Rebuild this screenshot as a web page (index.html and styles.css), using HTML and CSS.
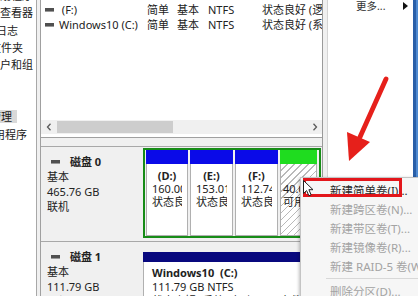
FILE: index.html
```html
<!DOCTYPE html>
<html lang="zh-CN">
<head>
<meta charset="utf-8">
<title>磁盘管理</title>
<link rel="stylesheet" href="styles.css">
</head>
<body>
<div class="screen">
  <aside class="nav">
    <div class="nav-inner">
      <div class="nav-item"><span class="i0">任务计划程序</span></div>
      <div class="nav-item"><span class="i1">事件查看器</span></div>
      <div class="nav-item"><span class="i2">事件日志</span></div>
      <div class="nav-item"><span class="i3">共享文件夹</span></div>
      <div class="nav-item"><span class="i4">本地用户和组</span></div>
      <div class="nav-item"><span class="i5">性能</span></div>
      <div class="nav-item"><span class="i6">存储</span></div>
      <div class="nav-item"><span class="i7 selected">磁盘管理</span></div>
      <div class="nav-item"><span class="i8">服务和应用程序</span></div>
    </div>
  </aside>
  <div class="gap-a"></div>
  <main class="main">
    <section class="list">
      <div class="rows">
        <div class="row">
          <span class="c-name"><i class="drv"></i>&nbsp;(F:)</span>
          <span class="c-layout">简单</span>
          <span class="c-type">基本</span>
          <span class="c-fs">NTFS</span>
          <span class="c-status">状态良好 (逻辑驱动器)</span>
        </div>
        <div class="row">
          <span class="c-name"><i class="drv"></i>Windows10 (C:)</span>
          <span class="c-layout">简单</span>
          <span class="c-type">基本</span>
          <span class="c-fs">NTFS</span>
          <span class="c-status">状态良好 (系统, 启动)</span>
        </div>
      </div>
      <div class="hscroll">
        <span class="sb-btn"><svg width="6" height="8" viewBox="0 0 6 8"><path d="M4.5 0.8 L1.5 4 L4.5 7.2" fill="none" stroke="#5a5a5a" stroke-width="1.3"/></svg></span>
        <span class="sb-track"><span class="sb-thumb"></span></span>
        <span class="sb-btn"><svg width="6" height="8" viewBox="0 0 6 8"><path d="M1.5 0.8 L4.5 4 L1.5 7.2" fill="none" stroke="#5a5a5a" stroke-width="1.3"/></svg></span>
      </div>
    </section>
    <section class="disks">
      <div class="disk">
        <div class="dlabel">
          <div class="dl-title"><i class="dicon"></i><b>磁盘 0</b></div>
          <div>基本</div>
          <div>465.76 GB</div>
          <div>联机</div>
        </div>
        <div class="ext">
          <div class="part p-d">
            <div class="hd"></div>
            <div class="bd"><div class="bd-in">
              <div class="ln"><b>(D:)</b></div>
              <div class="ln">160.00 GB NTFS</div>
              <div class="ln">状态良好 (逻辑驱动器)</div>
            </div></div>
          </div>
          <div class="part p-e">
            <div class="hd"></div>
            <div class="bd"><div class="bd-in">
              <div class="ln"><b>(E:)</b></div>
              <div class="ln">153.01 GB NTFS</div>
              <div class="ln">状态良好 (逻辑驱动器)</div>
            </div></div>
          </div>
          <div class="part p-f">
            <div class="hd"></div>
            <div class="bd"><div class="bd-in">
              <div class="ln"><b>(F:)</b></div>
              <div class="ln">112.74 GB NTFS</div>
              <div class="ln">状态良好 (逻辑驱动器)</div>
            </div></div>
          </div>
          <div class="part p-free">
            <div class="hd"></div>
            <div class="bd"><div class="bd-in free-in">
              <div class="ln">&nbsp;</div>
              <div class="ln">40.00 GB</div>
              <div class="ln">可用空间</div>
            </div></div>
          </div>
        </div>
      </div>
      <div class="disk">
        <div class="dlabel">
          <div class="dl-title"><i class="dicon"></i><b>磁盘 1</b></div>
          <div>基本</div>
          <div>111.79 GB</div>
          <div>联机</div>
        </div>
        <div class="prim">
          <div class="hd"></div>
          <div class="bd">
            <div class="ln2"><b>Windows10&nbsp; (C:)</b></div>
            <div class="ln2">111.79 GB NTFS</div>
            <div class="ln2">状态良好 (系统, 启动, 页面文件)</div>
          </div>
        </div>
      </div>
    </section>
  </main>
  <div class="gap-b"></div>
  <aside class="actions">
    <div class="act-item"><span>更多...</span><span class="tri"></span></div>
  </aside>
  <div class="desk"></div>

  <svg class="arrow" width="418" height="296" viewBox="0 0 418 296">
    <line x1="386" y1="79" x2="360" y2="137" stroke="#e6201b" stroke-width="4.8" stroke-linecap="round"/>
    <polygon points="349,161 347,132 370,142" fill="#e6201b"/>
  </svg>

  <div class="menu">
    <div class="mi on">新建简单卷(I)...</div>
    <div class="mi">新建跨区卷(N)...</div>
    <div class="mi">新建带区卷(T)...</div>
    <div class="mi">新建镜像卷(R)...</div>
    <div class="mi">新建 RAID-5 卷(W)...</div>
    <div class="msep"></div>
    <div class="mi">删除分区(D)...</div>
  </div>
  <div class="redbox"></div>
  <svg class="cursor" width="12" height="17" viewBox="0 0 12 17">
    <path d="M0.5 0.5 L0.5 13.5 L3.6 10.6 L5.9 15.8 L8.1 14.8 L5.9 9.7 L10 9.7 Z" fill="#fff" stroke="#222" stroke-width="1"/>
  </svg>
</div>
</body>
</html>
```

FILE: styles.css
```css
* { box-sizing: border-box; }
html, body { margin: 0; padding: 0; }
body {
  width: 418px;
  height: 296px;
  overflow: hidden;
  background: #f0f0f0;
  font-family: "Noto Sans", "Noto Sans CJK SC", sans-serif;
  font-size: 11px;
  color: #222;
}
.screen {
  position: relative;
  display: flex;
  width: 418px;
  height: 296px;
  overflow: hidden;
}

/* left tree */
.nav {
  width: 37px;
  flex: none;
  background: #fff;
  border-right: 1px solid #a8a8a8;
  overflow: hidden;
  color: #1a1a1a;
}
.nav-inner { margin-top: -13px; }
.nav-item {
  height: 17.3px;
  display: flex;
  align-items: center;
  white-space: nowrap;
}
.nav-item span { display: inline-block; flex: none; line-height: 13px; }
.i0 { margin-left: -33px; }
.i1 { margin-left: -22px; }
.i2 { margin-left: -26px; }
.i3 { margin-left: -32px; }
.i4 { margin-left: -33px; }
.i5 { margin-left: -40px; }
.i6 { margin-left: -50px; }
.i7 { margin-left: -32px; }
.i8 { margin-left: -50px; }
.selected { background: #d9d9d9; padding-right: 5px; }

.gap-a { width: 3px; flex: none; }
.gap-b { width: 4px; flex: none; }

/* main */
.main {
  width: 283px;
  flex: none;
  display: flex;
  flex-direction: column;
  border-left: 1px solid #a0a0a0;
  border-right: 1px solid #9a9a9a;
}
.list {
  height: 138px;
  flex: none;
  background: #fff;
  border-bottom: 1px solid #a0a0a0;
  display: flex;
  flex-direction: column;
}
.rows { height: 120px; padding-top: 2px; }
.row {
  display: flex;
  height: 15px;
  line-height: 15px;
  white-space: nowrap;
  overflow: hidden;
}
.c-name { width: 106px; flex: none; padding-left: 4px; display: flex; align-items: center; }
.c-layout { width: 30px; flex: none; }
.c-type { width: 31px; flex: none; }
.c-fs { width: 54px; flex: none; }
.c-status { flex: none; }
.drv {
  width: 9px;
  height: 4px;
  margin-right: 5px;
  background: #505050;
  border-bottom: 1px solid #9a9a9a;
  flex: none;
}
.hscroll {
  height: 14px;
  display: flex;
  background: #f0f0f0;
}
.sb-btn {
  width: 15px;
  flex: none;
  display: flex;
  align-items: center;
  justify-content: center;
}
.sb-track { flex: 1; display: flex; align-items: center; padding-left: 1px; }
.sb-thumb { width: 116px; height: 12px; background: #cdcdcd; }

/* disks */
.disks { flex: 1; padding-top: 8px; overflow: hidden; }
.disk {
  display: flex;
  height: 95px;
  border-top: 1px solid #a8a8a8;
}
.dlabel {
  width: 100px;
  flex: none;
  padding: 7px 0 0 6px;
  line-height: 15px;
  color: #222;
  white-space: nowrap;
}
.dl-title { display: flex; align-items: center; }
.dicon {
  width: 9px;
  height: 4px;
  margin: 0 10px 0 4px;
  background: #505050;
  border-bottom: 1px solid #9a9a9a;
}
.ext {
  width: 178px;
  height: 90px;
  margin: 1px 0 0 2px;
  border: 2px solid #178c17;
  padding: 0 1px;
  display: flex;
  gap: 2px;
}
.part { display: flex; flex-direction: column; flex: none; }
.p-d { width: 42px; }
.p-e { width: 43px; }
.p-f { width: 43px; }
.p-free { width: 37px; }
.part .hd { height: 14px; background: #0a0ae8; }
.p-free .hd { background: #1fdc1f; }
.part .bd {
  flex: 1;
  background: #fff;
  border: 1px solid #b0b0b0;
  border-top: none;
  padding-top: 5px;
}
.p-free .bd {
  background: repeating-linear-gradient(135deg, #fff 0 4px, #b9b9b9 4px 5px);
}
.bd-in { margin: 0 5px; overflow: hidden; }
.free-in { margin: 0 2px; }
.ln {
  height: 13px;
  line-height: 13px;
  text-align: center;
  white-space: nowrap;
}
.prim {
  width: 178px;
  margin: 10px 0 0 2px;
  display: flex;
  flex-direction: column;
}
.prim .hd { height: 10px; background: #08087e; }
.prim .bd {
  flex: 1;
  background: #fff;
  border-left: 1px solid #b0b0b0;
  border-right: 1px solid #b0b0b0;
  padding: 4px 0 0 8px;
  white-space: nowrap;
  overflow: hidden;
}
.ln2 { height: 14px; line-height: 14px; }

/* actions pane */
.actions {
  width: 86px;
  flex: none;
  background: #fff;
  border-left: 1px solid #d4d4d4;
}
.act-item {
  display: flex;
  align-items: center;
  justify-content: space-between;
  height: 11px;
  padding: 0 5px 0 28px;
  color: #333;
  font-size: 10.5px;
}
.tri {
  width: 0;
  height: 0;
  border-top: 4px solid transparent;
  border-bottom: 4px solid transparent;
  border-left: 5px solid #111;
}
.desk {
  width: 5px;
  flex: none;
  background: linear-gradient(to right, #2a5fa8 0 3px, #4f8ad0 3px);
}

/* overlays */
.arrow { position: absolute; left: 0; top: 0; pointer-events: none; }
.menu {
  position: absolute;
  left: 300px;
  top: 177px;
  width: 140px;
  height: 130px;
  background: #f6f6f6;
  border: 1px solid #c4c4c4;
  box-shadow: -1px 1px 3px rgba(0, 0, 0, 0.25);
  padding-top: 3px;
  font-size: 11.5px;
}
.mi {
  height: 19px;
  line-height: 19px;
  padding-left: 29px;
  white-space: nowrap;
  color: #a3a3a3;
}
.mi.on { color: #262626; }
.msep {
  height: 5px;
  margin-left: 25px;
  border-bottom: 1px solid #d8d8d8;
  margin-bottom: 1px;
  transform: translateY(-2px);
}
.redbox {
  position: absolute;
  left: 303px;
  top: 178px;
  width: 99px;
  height: 19px;
  border: 3px solid #e3161b;
}
.cursor { position: absolute; left: 303px; top: 180px; }
```
